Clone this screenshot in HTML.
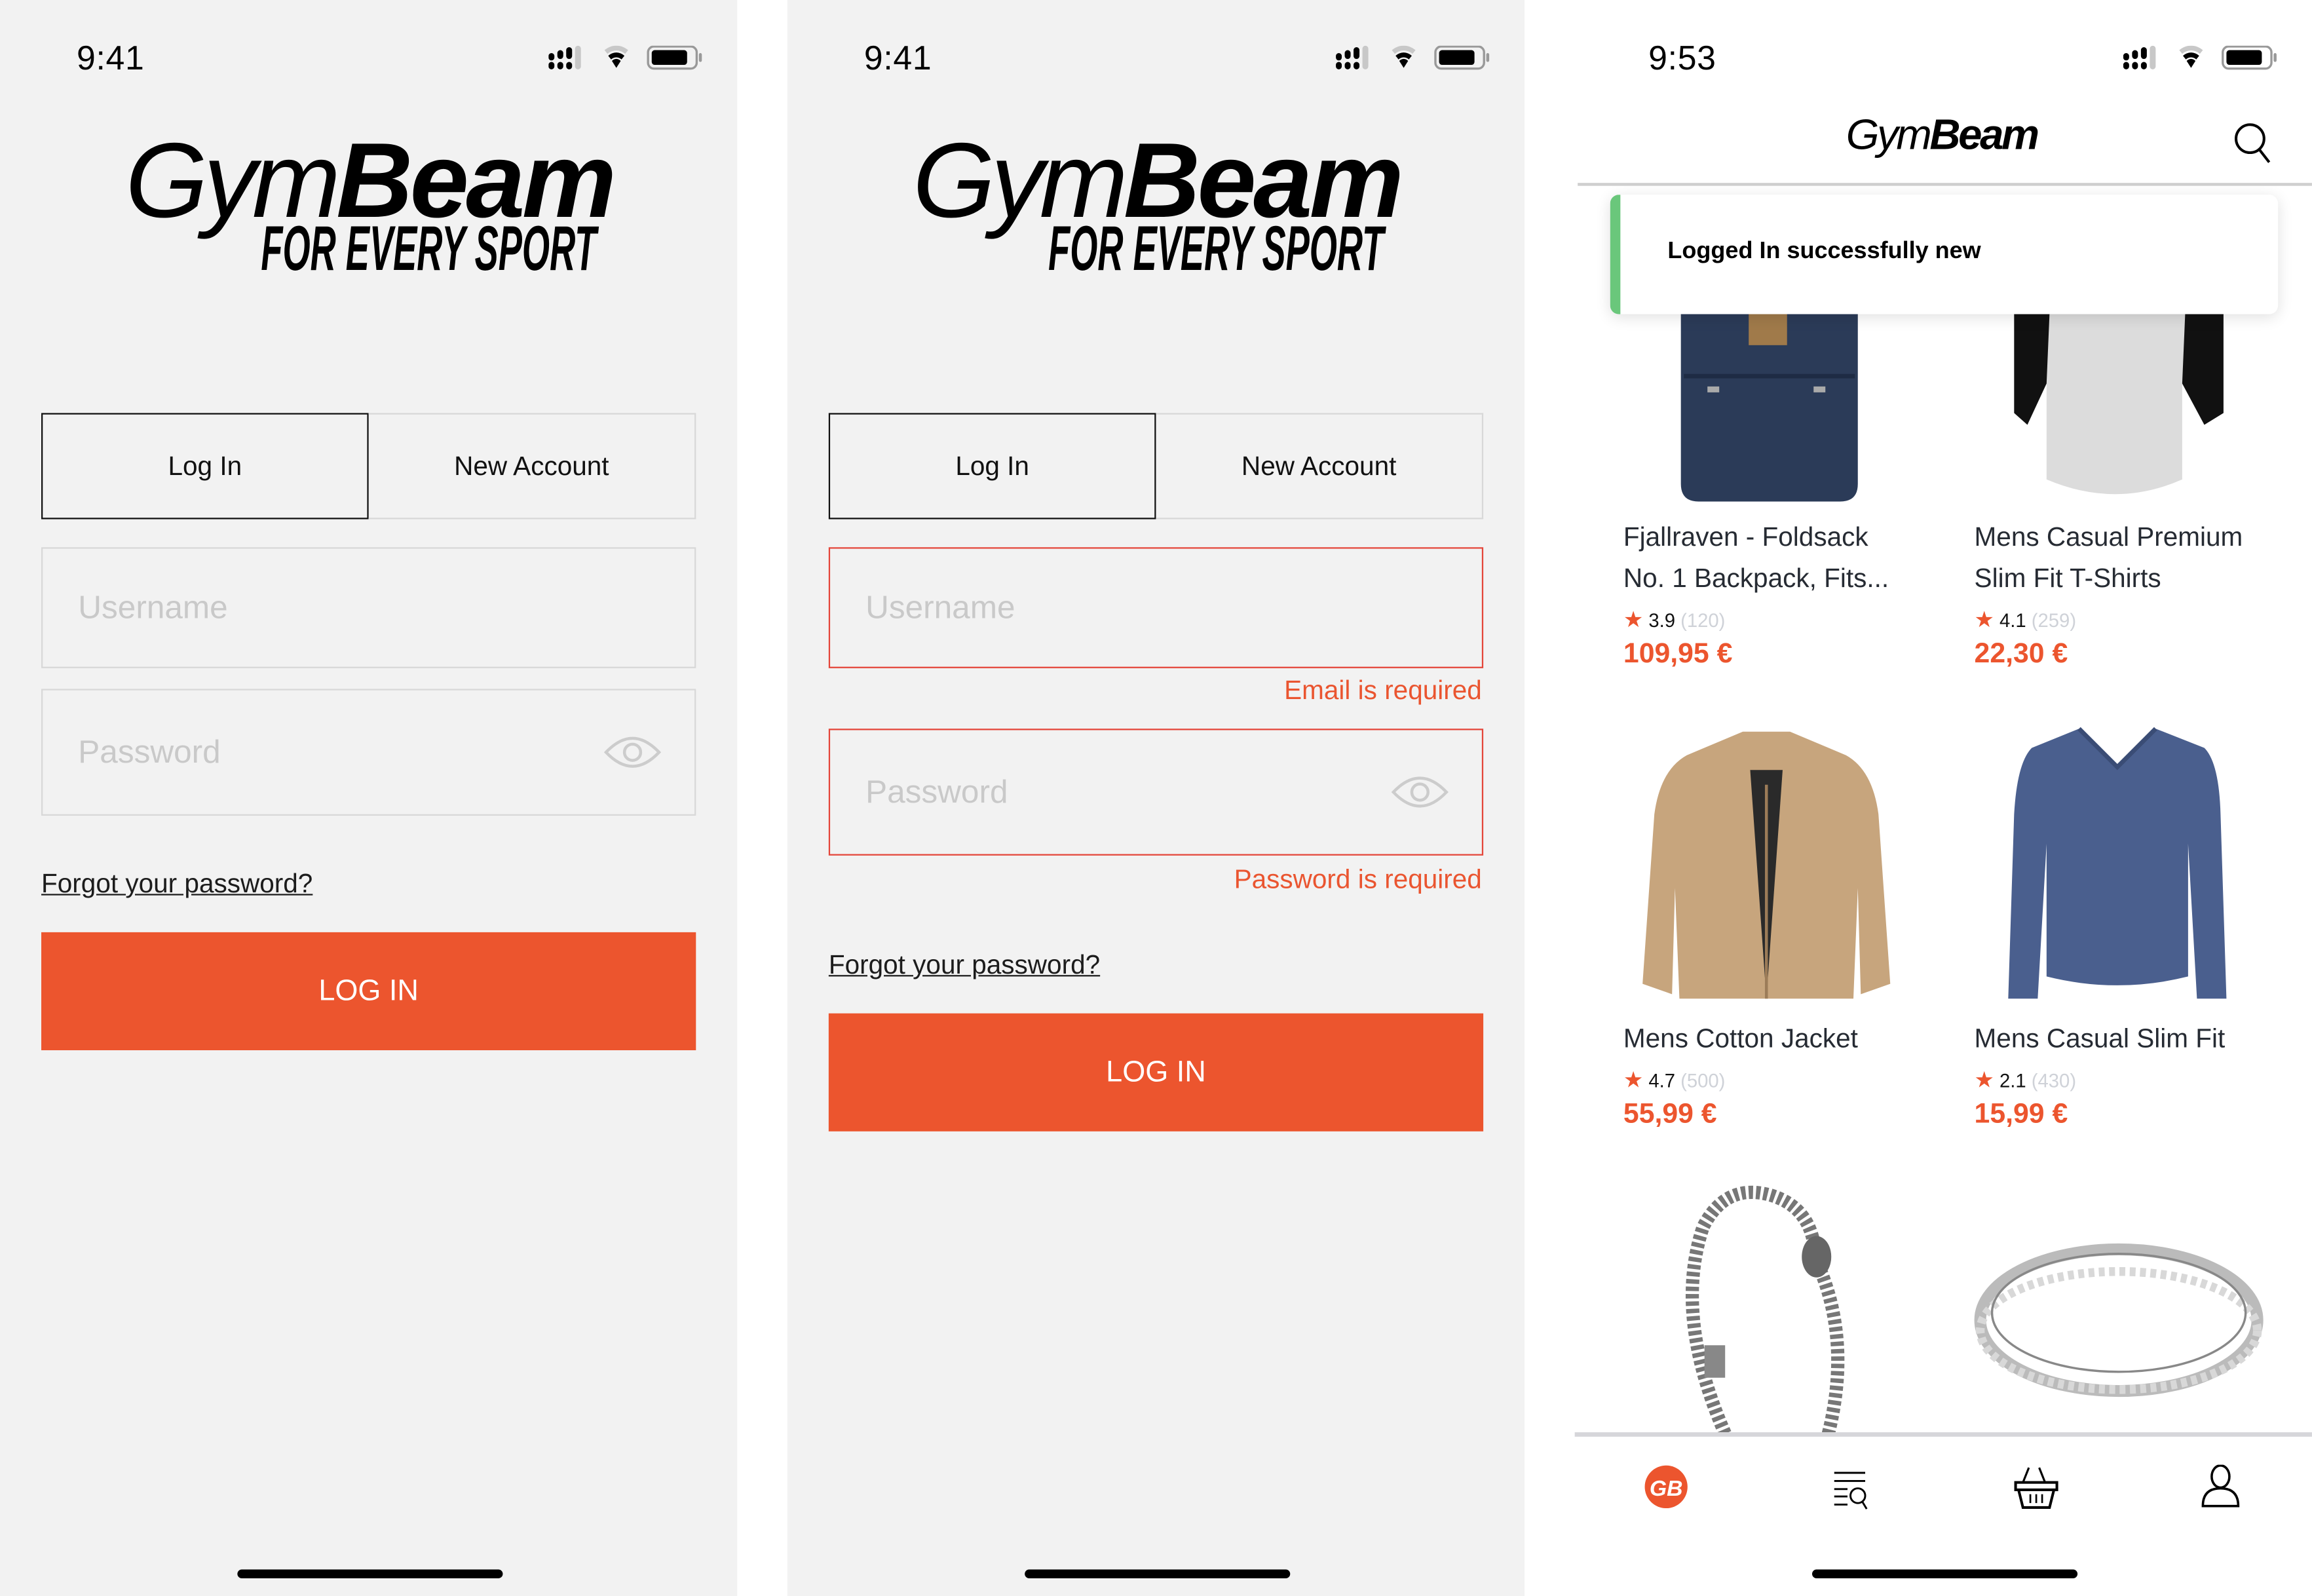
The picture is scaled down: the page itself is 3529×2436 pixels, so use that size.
<!DOCTYPE html>
<html><head><meta charset="utf-8"><style>
*{margin:0;padding:0;box-sizing:border-box}
html,body{width:3529px;height:2436px;overflow:hidden;background:#fff}
#w{position:absolute;left:0;top:0;width:1568px;height:1082px;transform:scale(2.2506,2.2514);transform-origin:0 0;font-family:"Liberation Sans",Arial,sans-serif;color:#1c1c1c}
.a{position:absolute}
.pan{position:absolute;top:0;width:500px;height:1082px;background:#f2f2f2}
.time{position:absolute;top:26px;font-size:23px;color:#000;letter-spacing:0.3px}
.logo1{position:absolute;left:85px;top:78px;font-size:72px;font-style:italic;color:#000;white-space:nowrap;letter-spacing:-3px;line-height:90px}
.logo1 b{font-weight:900;letter-spacing:-2px}
.logo2{position:absolute;left:177px;top:147px;font-size:43px;font-weight:900;font-style:italic;color:#000;transform:scaleX(0.56);transform-origin:0 0;white-space:nowrap;line-height:44px;letter-spacing:0}
.tab{position:absolute;height:72px;width:222px;font-size:18px;display:flex;align-items:center;justify-content:center;color:#111}
.inp{position:absolute;left:28px;width:444px;border:1.5px solid #d8d8d8;font-size:22px;color:#c9c9c9;padding-left:24px;display:flex;align-items:center}
.err{border-color:#e4463a}
.errt{position:absolute;right:28px;font-size:18px;color:#ea5530}
.forgot{position:absolute;left:28px;font-size:18px;text-decoration:underline;color:#1c1c1c}
.btn{position:absolute;left:28px;width:444px;height:80px;background:#ec552e;color:#fff;font-size:20px;display:flex;align-items:center;justify-content:center}
.home{position:absolute;width:180px;height:6px;border-radius:3px;background:#000;top:1064px}
.pt{position:absolute;font-size:18px;color:#262b33;line-height:28px}
.rt{position:absolute;font-size:13px;color:#111}
.rt i{font-style:normal;color:#ec552e;font-size:15px}
.rt span{color:#cfd2d8}
.pr{position:absolute;font-size:19px;font-weight:bold;color:#ec552e}
</style></head><body><div id="w">

<svg width="0" height="0" style="position:absolute"><defs>
<g id="st">
<rect x="0" y="5" width="4" height="5" rx="2" fill="#000"/><rect x="0" y="11" width="4" height="5" rx="2" fill="#000"/>
<rect x="6" y="3" width="4" height="6" rx="2" fill="#000"/><rect x="6" y="11" width="4" height="5" rx="2" fill="#000"/>
<rect x="12" y="1" width="4" height="8" rx="2" fill="#000"/><rect x="12" y="11" width="4" height="5" rx="2" fill="#000"/>
<rect x="18" y="0" width="4" height="16" rx="2" fill="#c8c8c8"/>
<path d="M38 3 a12 12 0 0 1 16 0 l-2 2.5 a9 9 0 0 0 -12 0z" fill="#c8c8c8"/>
<path d="M40.5 6.8 a8 8 0 0 1 11 0 l-2 2.5 a5 5 0 0 0 -7 0z M43 10.3 a4 4 0 0 1 6 0 L46 15z" fill="#000"/>
<rect x="67.5" y="0.5" width="33" height="15" rx="4" fill="none" stroke="#999" stroke-width="1.5"/>
<rect x="70" y="3" width="24" height="10" rx="2" fill="#000"/>
<rect x="102" y="5" width="2" height="6" rx="1" fill="#999"/>
</g></defs></svg>

<!-- PANEL 1 -->
<div class="pan" style="left:0"></div>
<div class="time" style="left:52px">9:41</div>
<svg class="a" style="left:372px;top:31px" width="106" height="17"><use href="#st"/></svg>
<div class="logo1">Gym<b>Beam</b></div>
<div class="logo2">FOR EVERY SPORT</div>
<div class="tab" style="left:28px;top:280px;border:1.5px solid #111">Log In</div>
<div class="tab" style="left:250px;top:280px;border:1.5px solid #d8d8d8;border-left:none">New Account</div>
<div class="inp" style="top:371px;height:82px">Username</div>
<div class="inp" style="top:467px;height:86px">Password</div>
<svg class="a" style="left:409px;top:497px" width="40" height="26" viewBox="0 0 40 26"><path d="M2 13 Q20 -6 38 13 Q20 32 2 13Z" fill="none" stroke="#ccc" stroke-width="2"/><circle cx="20" cy="13" r="5.5" fill="none" stroke="#ccc" stroke-width="2"/></svg>
<div class="forgot" style="top:589px">Forgot your password?</div>
<div class="btn" style="top:632px">LOG IN</div>
<div class="home" style="left:161px"></div>

<!-- PANEL 2 -->
<div class="pan" style="left:534px"></div>
<div class="time" style="left:586px">9:41</div>
<svg class="a" style="left:906px;top:31px" width="106" height="17"><use href="#st"/></svg>
<div class="logo1" style="left:619px">Gym<b>Beam</b></div>
<div class="logo2" style="left:711px">FOR EVERY SPORT</div>
<div class="tab" style="left:562px;top:280px;border:1.5px solid #111">Log In</div>
<div class="tab" style="left:784px;top:280px;border:1.5px solid #d8d8d8;border-left:none">New Account</div>
<div class="inp err" style="left:562px;top:371px;height:82px">Username</div>
<div class="errt" style="right:563px;top:458px">Email is required</div>
<div class="inp err" style="left:562px;top:494px;height:86px">Password</div>
<svg class="a" style="left:943px;top:524px" width="40" height="26" viewBox="0 0 40 26"><path d="M2 13 Q20 -6 38 13 Q20 32 2 13Z" fill="none" stroke="#ccc" stroke-width="2"/><circle cx="20" cy="13" r="5.5" fill="none" stroke="#ccc" stroke-width="2"/></svg>
<div class="errt" style="right:563px;top:586px">Password is required</div>
<div class="forgot" style="left:562px;top:644px">Forgot your password?</div>
<div class="btn" style="left:562px;top:687px">LOG IN</div>
<div class="home" style="left:695px"></div>

<!-- PANEL 3 -->
<div class="time" style="left:1118px">9:53</div>
<svg class="a" style="left:1440px;top:31px" width="106" height="17"><use href="#st"/></svg>
<div class="a" style="left:1252px;top:76px;font-size:29px;font-style:italic;letter-spacing:-1.5px;color:#000;white-space:nowrap">Gym<b style="font-weight:900">Beam</b></div>
<svg class="a" style="left:1514px;top:82px" width="28" height="30" viewBox="0 0 28 30"><circle cx="12" cy="12" r="9.5" fill="none" stroke="#000" stroke-width="1.8"/><path d="M18 19 L25 28" stroke="#000" stroke-width="1.8"/></svg>
<div class="a" style="left:1070px;top:124px;width:498px;height:1.5px;background:#cfcfcf"></div>

<svg class="a" style="left:1130px;top:200px" width="140" height="142" viewBox="0 0 140 142"><path d="M10 13 H130 V128 Q130 140 118 140 H22 Q10 140 10 128Z" fill="#2b3b58"/><rect x="56" y="12" width="26" height="22" fill="#a07a4a"/><path d="M12 55 H128" stroke="#1e2b44" stroke-width="3"/><rect x="28" y="62" width="8" height="4" fill="#aaa"/><rect x="100" y="62" width="8" height="4" fill="#aaa"/></svg>
<svg class="a" style="left:1360px;top:200px" width="150" height="142" viewBox="0 0 150 142"><path d="M20 13 H130 L148 80 L135 88 L120 60 L120 125 Q75 145 28 125 L28 60 L15 88 L6 80Z" fill="#dcdcdc"/><path d="M6 13 H30 L28 60 L15 88 L6 80Z" fill="#111"/><path d="M122 13 H148 V80 L135 88 L120 60Z" fill="#111"/></svg>

<div class="pt" style="left:1101px;top:350px">Fjallraven - Foldsack<br>No. 1 Backpack, Fits...</div>
<div class="rt" style="left:1101px;top:411px"><i>★</i> 3.9 <span>(120)</span></div>
<div class="pr" style="left:1101px;top:433px">109,95 €</div>
<div class="pt" style="left:1339px;top:350px">Mens Casual Premium<br>Slim Fit T-Shirts</div>
<div class="rt" style="left:1339px;top:411px"><i>★</i> 4.1 <span>(259)</span></div>
<div class="pr" style="left:1339px;top:433px">22,30 €</div>

<svg class="a" style="left:1112px;top:492px" width="172" height="188" viewBox="0 0 172 188"><path d="M70 4 H102 L140 20 Q158 30 162 60 L170 175 L150 182 L148 110 L145 185 H27 L24 110 L22 182 L2 175 L10 60 Q14 30 32 20Z" fill="#c7a57d"/><path d="M75 30 L86 185 L97 30 Z" fill="#2a2a2a"/><path d="M86 40 V185" stroke="#9c7c58" stroke-width="2"/></svg>
<svg class="a" style="left:1360px;top:492px" width="152" height="188" viewBox="0 0 152 188"><path d="M50 2 L76 28 L102 2 L135 15 Q145 25 146 60 L150 185 L130 185 L124 80 L124 170 Q76 182 28 170 L28 80 L22 185 L2 185 L6 60 Q8 25 18 15Z" fill="#4a5f8e"/><path d="M50 2 L76 28 L102 2" stroke="#3a4c75" stroke-width="3" fill="none"/></svg>

<div class="pt" style="left:1101px;top:690px">Mens Cotton Jacket</div>
<div class="rt" style="left:1101px;top:723px"><i>★</i> 4.7 <span>(500)</span></div>
<div class="pr" style="left:1101px;top:745px">55,99 €</div>
<div class="pt" style="left:1339px;top:690px">Mens Casual Slim Fit</div>
<div class="rt" style="left:1339px;top:723px"><i>★</i> 2.1 <span>(430)</span></div>
<div class="pr" style="left:1339px;top:745px">15,99 €</div>

<svg class="a" style="left:1140px;top:802px" width="120" height="170" viewBox="0 0 120 170"><path d="M30 170 Q-5 90 15 30 Q30 0 60 8 Q85 15 90 40" fill="none" stroke="#777" stroke-width="9" stroke-dasharray="3 2"/><path d="M100 170 Q115 110 95 60" fill="none" stroke="#777" stroke-width="9" stroke-dasharray="3 2"/><ellipse cx="92" cy="50" rx="10" ry="14" fill="#666"/><rect x="16" y="110" width="14" height="22" fill="#888"/></svg>
<svg class="a" style="left:1338px;top:840px" width="198" height="110" viewBox="0 0 198 110"><ellipse cx="99" cy="55" rx="94" ry="48" fill="none" stroke="#bbb" stroke-width="8"/><ellipse cx="99" cy="62" rx="94" ry="40" fill="none" stroke="#d8d8d8" stroke-width="6" stroke-dasharray="4 3"/><ellipse cx="99" cy="50" rx="86" ry="40" fill="none" stroke="#888" stroke-width="1.5"/></svg>

<div class="a" style="left:1092px;top:132px;width:453px;height:81px;background:#fff;border-radius:6px;box-shadow:0 2px 10px rgba(0,0,0,0.12);border-left:7px solid #6ac77b"></div>
<div class="a" style="left:1131px;top:162px;font-size:16px;font-weight:bold;color:#000">Logged In successfully new</div>

<div class="a" style="left:1068px;top:971px;width:500px;height:111px;background:#fff;border-top:3px solid #d6d6da"></div>
<svg class="a" style="left:1115px;top:993px" width="30" height="30"><circle cx="15" cy="15" r="14.5" fill="#ec552e"/><text x="15" y="21" font-size="15" font-weight="bold" font-style="italic" fill="#fff" text-anchor="middle" font-family="Liberation Sans">GB</text></svg>
<svg class="a" style="left:1240px;top:996px" width="30" height="28" viewBox="0 0 30 28"><path d="M4 2.5H25M4 8H25M4 13.5H13M4 18.5H13M4 24H13" stroke="#000" stroke-width="1.3"/><circle cx="20" cy="18" r="5" fill="none" stroke="#000" stroke-width="1.3"/><path d="M23 22 L26 27" stroke="#000" stroke-width="1.3"/></svg>
<svg class="a" style="left:1365px;top:994px" width="32" height="30" viewBox="0 0 32 30"><path d="M11 1 L7 11 M18 1 L22 11" stroke="#000" stroke-width="1.4"/><rect x="2" y="11" width="28" height="5" fill="none" stroke="#000" stroke-width="1.8"/><path d="M4 16 L7 28 H25 L28 16" fill="none" stroke="#000" stroke-width="1.8"/><path d="M12 19V25M16 19V25M20 19V25" stroke="#000" stroke-width="1.2"/></svg>
<svg class="a" style="left:1492px;top:993px" width="28" height="30" viewBox="0 0 28 30"><ellipse cx="14" cy="8" rx="6" ry="7.5" fill="none" stroke="#000" stroke-width="1.6"/><path d="M2 28 Q2 16 14 16 Q26 16 26 28Z" fill="none" stroke="#000" stroke-width="1.6"/></svg>
<div class="home" style="left:1229px;top:1064px"></div>

</div></body></html>
